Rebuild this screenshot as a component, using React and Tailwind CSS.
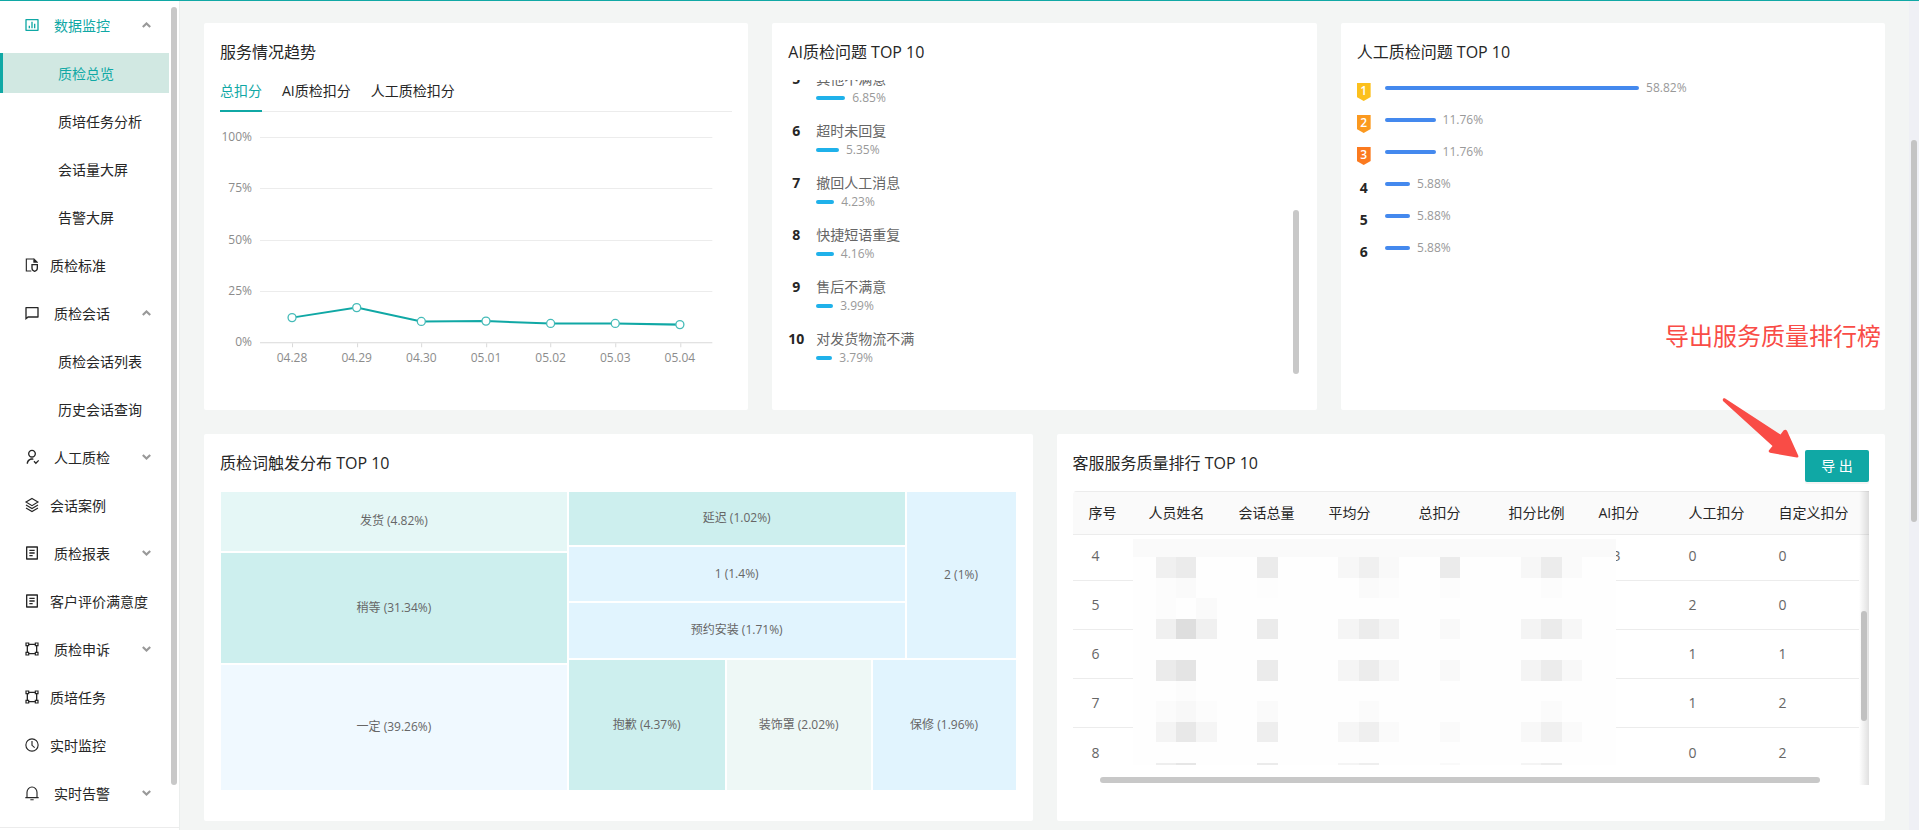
import React from "react";
import { RiBarChartBoxLine, RiUserFollowLine } from "react-icons/ri";

function FileShieldIcon() {
  return (
    <svg width="16" height="16" viewBox="0 0 24 24" aria-hidden="true">
      <path d="M14 3H3.500v18H11" fill="none" stroke="currentColor" strokeWidth="1.700" />
      <path d="M14 2v6.500h7V8l-6-6z" fill="currentColor" />
      <path d="M12 11.500h8V17c0 2.200-1.700 3.800-4 4.600-2.300-.8-4-2.400-4-4.600z" fill="none" stroke="currentColor" strokeWidth="2" />
    </svg>
  );
}

function MessageIcon() {
  return (
    <svg width="16" height="16" viewBox="0 0 24 24" fill="currentColor" aria-hidden="true">
      <path d="M6.455 19 2 22.500V4a1 1 0 0 1 1-1h18a1 1 0 0 1 1 1v14a1 1 0 0 1-1 1H6.455zM5.763 17H20V5H4v13.385L5.763 17z" />
    </svg>
  );
}

function ReportIcon() {
  return (
    <svg width="16" height="16" viewBox="0 0 24 24" fill="currentColor" aria-hidden="true">
      <path d="M20 22H4a1 1 0 0 1-1-1V3a1 1 0 0 1 1-1h16a1 1 0 0 1 1 1v18a1 1 0 0 1-1 1zm-1-2V4H5v16h14zM8 7h8v2H8V7zm0 4h8v2H8v-2zm0 4h5v2H8v-2z" />
    </svg>
  );
}

function LayersIcon() {
  return (
    <svg width="16" height="16" viewBox="0 0 24 24" fill="none" stroke="currentColor" strokeWidth="1.700" aria-hidden="true">
      <path d="M12 2.200 21 7.600l-9 5.400-9-5.400zM3 12l9 5.400 9-5.400M3 16.400l9 5.400 9-5.400" />
    </svg>
  );
}

function NodesIcon() {
  return (
    <svg width="16" height="16" viewBox="0 0 24 24" fill="none" stroke="currentColor" aria-hidden="true">
      <path strokeWidth="1.800" d="M3 3h4v4H3zM17 3h4v4h-4zM3 17h4v4H3zM17 17h4v4h-4z" />
      <path strokeWidth="2" d="M7 5h10M7 19h10M5 7v10M19 7v10" />
    </svg>
  );
}

function ClockIcon() {
  return (
    <svg width="16" height="16" viewBox="0 0 24 24" fill="none" stroke="currentColor" strokeWidth="1.700" aria-hidden="true">
      <circle cx="12" cy="12" r="9.200" />
      <path d="M12 6v6.500l4 3.500" />
    </svg>
  );
}

function BellIcon() {
  return (
    <svg width="16" height="16" viewBox="0 0 24 24" fill="none" stroke="currentColor" strokeWidth="1.700" aria-hidden="true">
      <path d="M4.500 19v-8a7.500 8 0 0 1 15 0v8M2 19h20M9.500 22.200h5" />
    </svg>
  );
}

function Chevron({ up }) {
  return (
    <svg width="9" height="6" viewBox="0 0 9 6" fill="none" stroke="#999999" strokeWidth="2.200" className="shrink-0" aria-hidden="true">
      <path d={up ? "M0.800 5 4.500 1.500 8.200 5" : "M0.800 1 4.500 4.500 8.200 1"} />
    </svg>
  );
}

const MENU = [
  { label: "数据监控", icon: <RiBarChartBoxLine size={16} />, open: true, active: true },
  { label: "质检总览", sub: true, selected: true },
  { label: "质培任务分析", sub: true },
  { label: "会话量大屏", sub: true },
  { label: "告警大屏", sub: true },
  { label: "质检标准", icon: <FileShieldIcon /> },
  { label: "质检会话", icon: <MessageIcon />, open: true },
  { label: "质检会话列表", sub: true },
  { label: "历史会话查询", sub: true },
  { label: "人工质检", icon: <RiUserFollowLine size={16} />, open: false },
  { label: "会话案例", icon: <LayersIcon /> },
  { label: "质检报表", icon: <ReportIcon />, open: false },
  { label: "客户评价满意度", icon: <ReportIcon /> },
  { label: "质检申诉", icon: <NodesIcon />, open: false },
  { label: "质培任务", icon: <NodesIcon /> },
  { label: "实时监控", icon: <ClockIcon /> },
  { label: "实时告警", icon: <BellIcon />, open: false },
];

function MenuItem({ item }) {
  const row = "flex h-10 w-full items-center text-left text-sm";
  if (item.sub) {
    return (
      <a
        href="#"
        className={
          item.selected
            ? `${row} border-l-[3px] border-[#10a8a5] bg-[#d1e8e2] pl-[55px] pt-[2px] text-[#10a8a5]`
            : `${row} pl-[58px] pt-[2px] text-[#262626]`
        }
      >
        {item.label}
      </a>
    );
  }
  if (item.open === undefined) {
    return (
      <a href="#" className={`${row} gap-[10px] pl-6 text-[#262626]`}>
        {item.icon}
        <span className="pt-[2px]">{item.label}</span>
      </a>
    );
  }
  return (
    <button
      type="button"
      aria-expanded={item.open}
      className={`${row} gap-[14px] pl-6 pr-[18px] ${item.active ? "text-[#10a8a5]" : "text-[#262626]"}`}
    >
      {item.icon}
      <span className="flex-1 pt-[2px]">{item.label}</span>
      <Chevron up={item.open} />
    </button>
  );
}

function Sidebar() {
  return (
    <aside className="flex w-[180px] shrink-0 flex-col border-r border-[#ebeeed] bg-white">
      <div className="flex min-h-0 flex-1">
        <nav className="flex w-[169px] flex-col gap-2 pt-1">
          {MENU.map((m) => (
            <MenuItem key={m.label} item={m} />
          ))}
        </nav>
        <div className="ml-[2px] mt-[6px] h-[778px] w-[6px] rounded-full bg-[#c8c8c8]" />
      </div>
      <div className="h-[3px] border-t border-[#ececec]" />
    </aside>
  );
}

function Card({ title, action, children }) {
  return (
    <section className="relative flex min-h-[387px] min-w-0 flex-col rounded-[2px] bg-white px-4 pt-4">
      <div className="flex items-start justify-between">
        <h2 className="text-base leading-[27px] text-[#262626]">{title}</h2>
        {action}
      </div>
      {children}
    </section>
  );
}

const TREND = [
  ["04.28", 191.5],
  ["04.29", 181.5],
  ["04.30", 195.3],
  ["05.01", 195],
  ["05.02", 197.3],
  ["05.03", 197.3],
  ["05.04", 198.5],
];

function TrendChart() {
  const xAt = (i) => 72 + i * 64.6;
  return (
    <svg viewBox="0 0 512 249" className="mt-[14px] block w-full" fontSize="12" fill="#8c8c8c" role="img" aria-label="服务情况趋势">
      {["100%", "75%", "50%", "25%", "0%"].map((t, i) => {
        const y = Math.floor(11.500 + i * 51.250);
        return (
          <g key={t}>
            <text x="32" y={y + 4} textAnchor="end">{t}</text>
            <line x1="40" x2="492" y1={y + 0.500} y2={y + 0.500} stroke={i === 4 ? "#d9d9d9" : "#ececec"} />
          </g>
        );
      })}
      {TREND.map(([d], i) => (
        <g key={d}>
          <line x1={Math.round(xAt(i)) + 0.500} x2={Math.round(xAt(i)) + 0.500} y1="217" y2="221" stroke="#d9d9d9" />
          <text x={xAt(i)} y="236" textAnchor="middle">{d}</text>
        </g>
      ))}
      <polyline points={TREND.map(([, y], i) => `${xAt(i)},${y}`).join(" ")} fill="none" stroke="#10a8a5" strokeWidth="2" />
      {TREND.map(([d, y], i) => (
        <circle key={d} cx={xAt(i)} cy={y} r="4" fill="#fff" stroke="#45bbb8" strokeWidth="1.300" />
      ))}
    </svg>
  );
}

function TrendCard() {
  return (
    <Card title="服务情况趋势">
      <div role="tablist" className="mt-1 flex gap-5 border-b border-[#ececec] text-sm">
        <button role="tab" aria-selected="true" type="button" className="-mb-px border-b-2 border-[#10a8a5] pb-[9px] pt-[11px] text-[#10a8a5]">总扣分</button>
        <button role="tab" aria-selected="false" type="button" className="pb-[10px] pt-[11px] text-[#262626]">AI质检扣分</button>
        <button role="tab" aria-selected="false" type="button" className="pb-[10px] pt-[11px] text-[#262626]">人工质检扣分</button>
      </div>
      <TrendChart />
    </Card>
  );
}

function Bar({ value, color }) {
  return (
    <div className="flex h-4 items-center gap-[7px]">
      <div className={`h-1 shrink-0 rounded-full ${color}`} style={{ width: `${value * 0.893}%` }} />
      <span className="text-xs text-[#999999]">{value}%</span>
    </div>
  );
}

const AI_ISSUES = [
  [5, "其他不满意", 6.85],
  [6, "超时未回复", 5.35],
  [7, "撤回人工消息", 4.23],
  [8, "快捷短语重复", 4.16],
  [9, "售后不满意", 3.99],
  [10, "对发货物流不满", 3.79],
];

function AiCard() {
  return (
    <Card title="AI质检问题 TOP 10">
      <ul className="mt-[14px] flex h-[300px] flex-col justify-end overflow-hidden pr-3">
        {AI_ISSUES.map(([rank, name, value]) => (
          <li key={rank} className="flex h-[52px] shrink-0 gap-3">
            <span className="w-4 text-center text-sm font-bold leading-[22px] text-[#262626]">{rank}</span>
            <div className="flex-1">
              <p className="text-sm leading-[22px] text-[#666666]">{name}</p>
              <Bar value={value} color="bg-[#1fb1ea]" />
            </div>
          </li>
        ))}
      </ul>
      <div className="absolute right-[18px] top-[187px] h-[164px] w-[6px] rounded-full bg-[#c8c8c8]" />
    </Card>
  );
}

const BADGES = { 1: "bg-[#fcc01d]", 2: "bg-[#fb991f]", 3: "bg-[#fb7a1f]" };
const MANUAL_ISSUES = [58.82, 11.76, 11.76, 5.88, 5.88, 5.88];

function ManualCard() {
  return (
    <Card title="人工质检问题 TOP 10">
      <ul className="mt-[14px]">
        {MANUAL_ISSUES.map((value, i) => (
          <li key={i} className="flex h-8 gap-[14px]">
            {BADGES[i + 1] ? (
              <span className={`mt-[3px] h-[18px] w-[14px] text-center text-xs font-semibold leading-4 text-white [clip-path:polygon(0_0,100%_0,100%_78%,50%_100%,0_78%)] ${BADGES[i + 1]}`}>
                {i + 1}
              </span>
            ) : (
              <span className="mt-[3px] w-[14px] text-center text-sm font-bold leading-[18px] text-[#262626]">{i + 1}</span>
            )}
            <div className="flex-1">
              <Bar value={value} color="bg-[#4489ee]" />
            </div>
          </li>
        ))}
      </ul>
    </Card>
  );
}

const tile = "flex min-w-0 basis-0 items-center justify-center pb-px";

function Treemap() {
  return (
    <div className="mx-px mt-[15px] flex h-[298px] gap-[2px] text-xs text-[#666666]">
      <div className="flex flex-[346] flex-col gap-[2px]">
        <div className={`${tile} grow-[59] bg-[#e5f7f6]`}>发货 (4.82%)</div>
        <div className={`${tile} grow-[110] bg-[#cdefee]`}>稍等 (31.34%)</div>
        <div className={`${tile} grow-[125] bg-[#f0f9ff]`}>一定 (39.26%)</div>
      </div>
      <div className="flex flex-[447] flex-col gap-[2px]">
        <div className="flex grow-[166] basis-0 gap-[2px]">
          <div className="flex flex-[336] flex-col gap-[2px]">
            <div className={`${tile} grow-[53] bg-[#cdefee]`}>延迟 (1.02%)</div>
            <div className={`${tile} grow-[54] bg-[#e1f4fe]`}>1 (1.4%)</div>
            <div className={`${tile} grow-[55] bg-[#e1f4fe]`}>预约安装 (1.71%)</div>
          </div>
          <div className={`${tile} grow-[109] bg-[#e1f4fe]`}>2 (1%)</div>
        </div>
        <div className="flex grow-[130] basis-0 gap-[2px]">
          <div className={`${tile} grow-[156] bg-[#cdefee]`}>抱歉 (4.37%)</div>
          <div className={`${tile} grow-[144] bg-[#eef8f6]`}>装饰罩 (2.02%)</div>
          <div className={`${tile} grow-[143] bg-[#e1f4fe]`}>保修 (1.96%)</div>
        </div>
      </div>
    </div>
  );
}

const HEADS = ["序号", "人员姓名", "会话总量", "平均分", "总扣分", "扣分比例", "AI扣分", "人工扣分", "自定义扣分"];
const ROWS = [
  [4, "3", 0, 0],
  [5, "", 2, 0],
  [6, "", 1, 1],
  [7, "", 1, 2],
  [8, "", 0, 2],
];

/* Masked cells: [column, row, fill] on a 20.3 x 20.6 grid */
const MASK = [
  [1, 0, "#f0f0f0"], [2, 0, "#ebebeb"], [6, 0, "#ebebeb"], [10, 0, "#f7f7f7"], [11, 0, "#f0f0f0"], [12, 0, "#f9f9f9"], [15, 0, "#ebebeb"], [19, 0, "#f7f7f7"], [20, 0, "#ececec"], [21, 0, "#fafafa"],
  [1, 1, "#fcfcfc"], [2, 1, "#fafafa"], [6, 1, "#fdfdfd"], [11, 1, "#fafafa"], [12, 1, "#fcfcfc"], [15, 1, "#fcfcfc"], [20, 1, "#fcfcfc"],
  [1, 2, "#fcfcfc"], [3, 2, "#fafafa"],
  [1, 3, "#f0f0f0"], [2, 3, "#dedede"], [3, 3, "#f0f0f0"], [6, 3, "#ebebeb"], [10, 3, "#f5f5f5"], [11, 3, "#ececec"], [12, 3, "#f4f4f4"], [15, 3, "#f9f9f9"], [19, 3, "#f4f4f4"], [20, 3, "#ebebeb"], [21, 3, "#f7f7f7"],
  [1, 5, "#ebebeb"], [2, 5, "#e4e4e4"], [6, 5, "#ebebeb"], [10, 5, "#f5f5f5"], [11, 5, "#ececec"], [12, 5, "#f6f6f6"], [15, 5, "#f9f9f9"], [19, 5, "#f4f4f4"], [20, 5, "#ececec"], [21, 5, "#f8f8f8"],
  [2, 6, "#fcfcfc"],
  [1, 7, "#fbfbfb"], [2, 7, "#f8f8f8"], [3, 7, "#fcfcfc"], [6, 7, "#fafafa"], [11, 7, "#fbfbfb"], [20, 7, "#fbfbfb"],
  [1, 8, "#f4f4f4"], [2, 8, "#e8e8e8"], [3, 8, "#f5f5f5"], [6, 8, "#eeeeee"], [10, 8, "#f6f6f6"], [11, 8, "#efefef"], [12, 8, "#fafafa"], [15, 8, "#fafafa"], [19, 8, "#f8f8f8"], [20, 8, "#f0f0f0"], [21, 8, "#fafafa"],
  [1, 10, "#eeeeee"], [2, 10, "#e6e6e6"], [6, 10, "#ebebeb"], [10, 10, "#f4f4f4"], [11, 10, "#eeeeee"], [15, 10, "#f9f9f9"], [19, 10, "#f4f4f4"], [20, 10, "#ececec"],
];

function RankCard() {
  const td = "px-4";
  return (
    <Card
      title="客服服务质量排行 TOP 10"
      action={
        <button type="button" className="h-8 w-16 shrink-0 rounded-[2px] bg-[#10a8a5] text-sm text-white shadow-[0_2px_0_rgba(0,0,0,0.045)]">
          导 出
        </button>
      }
    >
      <div className="relative mt-[9px] h-[294px] overflow-hidden rounded-tl">
        <table className="w-full table-fixed border-separate border-spacing-0 text-left text-sm">
          <colgroup>
            <col className="w-[60px]" />
            <col className="w-[90px]" />
            <col className="w-[90px]" />
            <col className="w-[90px]" />
            <col className="w-[90px]" />
            <col className="w-[90px]" />
            <col className="w-[90px]" />
            <col className="w-[90px]" />
            <col />
            <col className="w-[10px]" />
          </colgroup>
          <thead>
            <tr className="h-11">
              {HEADS.map((h) => (
                <th key={h} scope="col" className="whitespace-nowrap border-y border-[#ececec] bg-[#fafafa] pl-4 font-normal text-[#262626]">
                  {h}
                </th>
              ))}
              <td className="border-y border-[#ececec] bg-[#fafafa]" />
            </tr>
          </thead>
          <tbody className="text-[#666666] [&>tr>td]:border-b [&>tr>td]:border-[#ececec] [&>tr>td:last-child]:border-0 [&>tr:last-child>td]:border-0">
            {ROWS.map(([no, ai, manual, custom], i) => (
              <tr key={no} className={i === 0 ? "h-[46px] [&>td]:pb-[3px]" : "h-[49px]"}>
                <td className="pl-[19px]">{no}</td>
                <td className={td} />
                <td className={td} />
                <td className={td} />
                <td className={td} />
                <td className={td} />
                <td className="pl-[30px]">{ai}</td>
                <td className={td}>{manual}</td>
                <td className={td}>{custom}</td>
                <td />
              </tr>
            ))}
          </tbody>
        </table>
        <svg width="483" height="226" viewBox="0 0 483 226" className="absolute left-[60px] top-12" aria-hidden="true" shapeRendering="crispEdges">
          <rect width="483" height="226" fill="#fefefe" />
          <rect width="483" height="18" fill="#fafafa" />
          {MASK.map(([c, r, fill]) => (
            <rect key={`${c}-${r}`} x={2.4 + c * 20.3} y={18 + r * 20.6} width="20.3" height="20.6" fill={fill} />
          ))}
        </svg>
        <div className="absolute right-0 top-0 h-full w-[10px] bg-linear-to-r from-black/0 to-black/12" />
        <div className="absolute right-[2px] top-[120px] h-[110px] w-[6px] rounded-full bg-[#c1c1c1]" />
        <div className="absolute bottom-[2px] left-[27px] right-[49px] h-[6px] rounded-full bg-[#c8c8c8]" />
      </div>
    </Card>
  );
}

function Annotation() {
  return (
    <div className="pointer-events-none absolute right-[4px] top-[295px] text-[#f94c46]">
      <p className="text-2xl leading-9">导出服务质量排行榜</p>
      <svg width="78" height="62" viewBox="0 0 78 62" className="ml-[57px] mt-[44px]" fill="currentColor" aria-hidden="true">
        <path d="M2.800 0.300 58.500 36.500 61.500 32.600Q63.500 31 65 32.800L76.300 57.800Q76.800 59.800 74.800 59.600L48 54.800Q46 54 47 52.300L50.500 48 1 3Q0 0 2.800 0.300Z" />
      </svg>
    </div>
  );
}

export default function App() {
  return (
    <div className="flex h-screen flex-col overflow-hidden border-t border-[#10a8a5] bg-[#f3f5f4] [font-family:'Open_Sans','Noto_Sans_CJK_SC',sans-serif]">
      <div className="flex min-h-0 flex-1">
        <Sidebar />
        <main className="min-w-0 flex-1 overflow-hidden px-6 pt-[22px]">
          <div className="relative flex flex-col gap-6">
            <div className="grid grid-cols-3 gap-6">
              <TrendCard />
              <AiCard />
              <ManualCard />
            </div>
            <div className="grid grid-cols-2 gap-6">
              <Card title="质检词触发分布 TOP 10">
                <Treemap />
              </Card>
              <RankCard />
            </div>
            <Annotation />
          </div>
        </main>
        <div className="w-[10px] shrink-0 bg-[#eff0f5] pl-[2px] pt-[139px]">
          <div className="h-[382px] w-[6px] rounded-full bg-[#c4c4c4]" />
        </div>
      </div>
    </div>
  );
}
